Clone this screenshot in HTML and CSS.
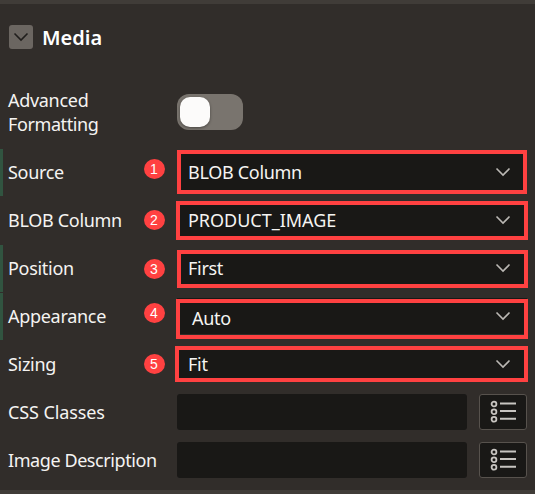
FILE: index.html
```html
<!DOCTYPE html>
<html lang="en">
<head>
<meta charset="utf-8">
<title>Media</title>
<link rel="stylesheet" href="styles.css">
</head>
<body>
<svg class="defs" width="0" height="0">
  <symbol id="chevron" viewBox="0 0 16 10"><path d="M1.5 1.5 8 8l6.5-6.5" fill="none" stroke="currentColor" stroke-width="1.6"/></symbol>
  <symbol id="list" viewBox="0 0 26 24"><g fill="none" stroke="currentColor" stroke-width="1.8"><circle cx="4" cy="4" r="2.4"/><circle cx="4" cy="11.7" r="2.4"/><circle cx="4" cy="19.3" r="2.4"/><path d="M10 3.5h16M10 11h16M10 18.8h16" stroke-width="2"/></g></symbol>
</svg>
<main class="panel">
  <header class="head">
    <button class="toggle" aria-label="Collapse"><svg width="16" height="10"><use href="#chevron"/></svg></button>
    <h1>Media</h1>
  </header>
  <div class="row tall">
    <label>Advanced<br><span class="formatting">Formatting</span></label>
    <div class="switch"><span></span></div>
  </div>
  <div class="row changed source">
    <label>Source</label>
    <div class="select"><span>BLOB Column</span><svg width="16" height="10"><use href="#chevron"/></svg></div>
    <i class="mark"></i><b class="badge">1</b>
  </div>
  <div class="row column">
    <label>BLOB Column</label>
    <div class="select"><span class="upper">PRODUCT_IMAGE</span><svg width="16" height="10"><use href="#chevron"/></svg></div>
    <i class="mark"></i><b class="badge">2</b>
  </div>
  <div class="row changed position">
    <label>Position</label>
    <div class="select"><span>First</span><svg width="16" height="10"><use href="#chevron"/></svg></div>
    <i class="mark"></i><b class="badge">3</b>
  </div>
  <div class="row changed appearance">
    <label>Appearance</label>
    <div class="select"><span>Auto</span><svg width="16" height="10"><use href="#chevron"/></svg></div>
    <i class="mark"></i><b class="badge">4</b>
  </div>
  <div class="row sizing">
    <label>Sizing</label>
    <div class="select"><span>Fit</span><svg width="16" height="10"><use href="#chevron"/></svg></div>
    <i class="mark"></i><b class="badge">5</b>
  </div>
  <div class="row classes">
    <label>CSS Classes</label>
    <div class="field"></div>
    <button class="pick" aria-label="List"><svg width="26" height="24"><use href="#list"/></svg></button>
  </div>
  <div class="row description">
    <label>Image Description</label>
    <div class="field"></div>
    <button class="pick" aria-label="List"><svg width="26" height="24"><use href="#list"/></svg></button>
  </div>
</main>
</body>
</html>
```
FILE: styles.css
```css
* { box-sizing: border-box; }
body { margin: 0; background: #312d2a; color: #f5f4f2; font: 18px/24px "Noto Sans", "Open Sans", sans-serif; }
.defs { display: block; }
.panel { height: 494px; border-top: 4px solid #403c38; border-bottom: 4px solid #403c38; overflow: hidden; }
button { padding: 0; }
.head { display: flex; align-items: center; gap: 9px; height: 66px; padding-left: 9px; }
.toggle { display: grid; place-items: center; width: 24px; height: 24px; border: 0; border-radius: 3px; background: #6b6661; color: #201e1c; }
h1 { margin: 2px 0 0; font-size: 20px; font-weight: 600; line-height: 28px; color: #fff; }
.row { position: relative; display: flex; align-items: center; height: 48px; padding-left: 8px; }
.row.tall { height: 78px; padding-top: 6px; }
label { flex: 0 0 169px; white-space: nowrap; letter-spacing: -0.3px; }
.formatting { letter-spacing: -0.4px; }
.classes label { letter-spacing: -0.1px; }
.description label { letter-spacing: -0.42px; }
.changed::before { content: ""; position: absolute; left: 0; top: 1px; width: 3px; height: 47px; background: #315440; }
.switch { width: 66px; height: 36px; padding: 3px; border-radius: 12px; background: #79746e; }
.switch span { display: block; width: 30px; height: 30px; border-radius: 10px; background: #fcfbfa; box-shadow: 0 1px 3px #0006; }
.select { display: flex; align-items: center; justify-content: space-between; width: 350px; height: 36px; padding: 0 16px 0 11px; background: #191816; letter-spacing: -0.3px; }
.select .upper { letter-spacing: -0.02px; }
.select svg { color: #bbb8b4; }
.mark { position: absolute; border: 4px solid #ff4141; background: transparent; }
.badge { position: absolute; left: 143.5px; width: 21px; height: 20px; border-radius: 50%; background: #ff4141; color: #fff; font: 14px/20px "Liberation Sans", sans-serif; text-align: center; }
.source .mark { left: 177px; top: 2px; width: 350px; height: 44px; }
.source .badge { top: 11px; }
.column .mark { left: 176px; top: 5px; width: 352px; height: 39px; }
.column .badge { top: 14px; }
.position .mark { left: 177px; top: 6px; width: 351px; height: 38px; }
.position .badge { top: 15px; }
.appearance .mark { left: 176px; top: 7px; width: 352px; height: 40px; }
.appearance .badge { top: 11px; }
.appearance .select span { position: relative; left: 4px; top: 2px; }
.sizing .mark { left: 175px; top: 6px; width: 353px; height: 36px; }
.sizing .badge { top: 14px; }
.field { width: 290px; height: 36px; margin-right: 12px; border-radius: 3px; background: #191816; }
.pick { display: grid; place-items: center; width: 48px; height: 36px; border: 1px solid #57524d; border-radius: 3px; background: #191816; color: #c8c5c1; }
```
